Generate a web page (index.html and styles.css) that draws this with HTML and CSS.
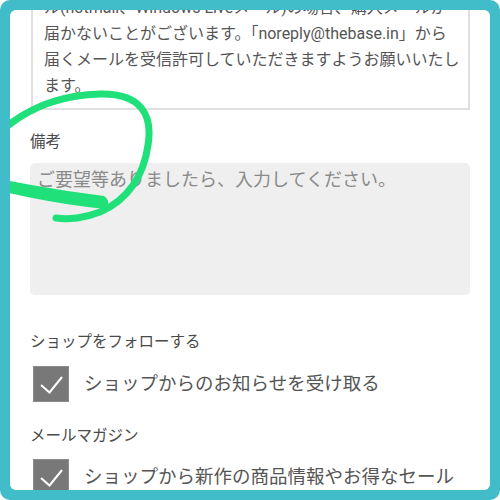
FILE: index.html
```html
<!DOCTYPE html>
<html lang="ja">
<head>
    <meta charset="UTF-8">
    <meta name="viewport" content="width=device-width, initial-scale=1.0">
    <title>備考</title>
    <link rel="stylesheet" href="styles.css">
</head>
<body>
    <div class="frame">
        <div class="panel">
            <div class="notice">
                <span class="line">ル(hotmail、Windows Liveメール)の場合、購入メールが</span>
                <span class="line">届かないことがございます。「noreply@thebase.in」から</span>
                <span class="line">届くメールを受信許可していただきますようお願いいたし</span>
                <span class="line">ます。</span>
            </div>

            <div class="field">
                <label class="field-label" for="memo">備考</label>
                <textarea id="memo" class="memo" placeholder="ご要望等ありましたら、入力してください。"></textarea>
            </div>

            <div class="field field-check">
                <div class="field-label">ショップをフォローする</div>
                <label class="check-row">
                    <span class="check">
                        <svg width="36" height="36" viewBox="0 0 36 36"><path d="M8 19 L16.5 26.5 L29 11" fill="none" stroke="#fff" stroke-width="2"/></svg>
                    </span>
                    <span class="check-text">ショップからのお知らせを受け取る</span>
                </label>
            </div>

            <div class="field field-mail">
                <div class="field-label">メールマガジン</div>
                <label class="check-row">
                    <span class="check">
                        <svg width="36" height="36" viewBox="0 0 36 36"><path d="M8 19 L16.5 26.5 L29 11" fill="none" stroke="#fff" stroke-width="2"/></svg>
                    </span>
                    <span class="check-text">ショップから新作の商品情報やお得なセール</span>
                </label>
            </div>

            <!-- hand drawn marker over the memo label -->
            <svg class="marker" width="200" height="240" viewBox="0 0 200 240">
                <path d="M-5 118 C20 97 50 85 90 84 C131 83 143 105 138 135 C134 165 118 190 90 202 C75 208 58 210 46 208" fill="none" stroke="#20e07a" stroke-width="7" stroke-linecap="round"/>
                <path d="M-5 170 Q45 180 94 186 Q102 192 95 199 Q45 194 -5 182 Z" fill="#20e07a"/>
            </svg>
        </div>
    </div>
</body>
</html>
```

FILE: styles.css
```css
:root {
    --frame-color: #41bcc9;
    --text-color: #555;
    --label-color: #4a4a4a;
    --line-color: #e0e0e0;
    --field-bg: #efefef;
}

body {
    margin: 0;
    padding: 0;
    background-color: #fff;
    font-family: 'Roboto', 'Noto Sans CJK JP', sans-serif;
    color: var(--text-color);
}

.frame {
    width: 500px;
    height: 500px;
    box-sizing: border-box;
    padding: 10px;
    background-color: var(--frame-color);
    border-radius: 10px;
}

.panel {
    position: relative;
    height: 100%;
    padding: 0 20px;
    background-color: #fff;
    border-radius: 6px;
    overflow: hidden;
}

.notice {
    margin: -27px 0 0 1px;
    padding: 10px 0 9px 11px;
    border: 2px solid var(--line-color);
    font-size: 16px;
    line-height: 26px;
}

.notice .line {
    display: block;
    white-space: nowrap;
}

.field {
    margin-top: 21px;
}

.field-check {
    margin-top: 36px;
}

.field-mail {
    margin-top: 23px;
}

.field-label {
    display: block;
    font-size: 15.5px;
    line-height: 22px;
    color: var(--label-color);
}

.memo {
    display: block;
    width: 100%;
    height: 132px;
    box-sizing: border-box;
    margin-top: 10px;
    padding: 4px 7px;
    border: none;
    border-radius: 5px;
    background-color: var(--field-bg);
    font-family: 'Roboto', 'Noto Sans CJK JP', sans-serif;
    font-size: 18px;
    line-height: 26px;
    resize: none;
}

.memo::placeholder {
    color: #8a8a8a;
}

.check-row {
    display: flex;
    align-items: center;
    gap: 15px;
    margin-top: 13px;
    padding-left: 3px;
}

.field-mail .check-row {
    margin-top: 12px;
}

.check {
    width: 36px;
    height: 36px;
    flex-shrink: 0;
    background-color: #787878;
    box-shadow: inset 0 0 0 1px #8c8c8c;
}

.check svg {
    display: block;
}

.check-text {
    font-size: 18.5px;
    line-height: 26px;
    white-space: nowrap;
}

.marker {
    position: absolute;
    left: 0;
    top: 0;
    pointer-events: none;
}
```
